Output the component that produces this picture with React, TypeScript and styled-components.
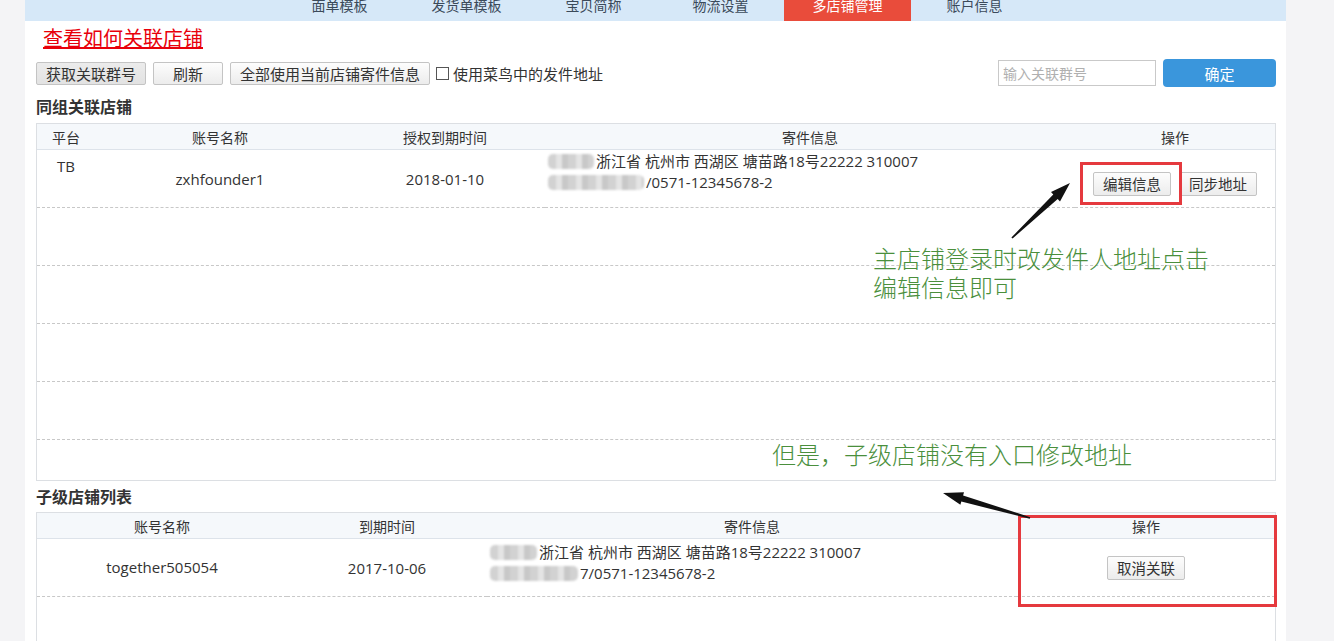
import React from "react";
import styled, { createGlobalStyle } from "styled-components";

const GlobalStyle = createGlobalStyle`
  html, body {
    margin: 0;
    padding: 0;
    background: #f4f4f6;
  }
  body {
    font-family: "Open Sans", "Noto Sans CJK SC", sans-serif;
    color: #333;
  }
`;

const CJK = `"Noto Sans CJK SC", "Open Sans", sans-serif`;

const Page = styled.div`
  position: relative;
  margin-left: 25px;
  width: 1261px;
  min-height: 641px;
  background: #fff;
  overflow: hidden;
`;

const NavBar = styled.div`
  display: flex;
  height: 21px;
  padding-left: 251px;
  background: #d6e8f8;
  overflow: hidden;
`;

const NavItem = styled.div<{ $active?: boolean }>`
  width: 127px;
  height: 21px;
  line-height: 10px;
  text-align: center;
  font-family: ${CJK};
  font-size: 14px;
  color: ${(p) => (p.$active ? "#fff" : "#3b4a5a")};
  background: ${(p) => (p.$active ? "#e94c3b" : "transparent")};
`;

const Content = styled.div`
  padding: 0 10px 0 11px;
`;

const HelpLink = styled.a`
  display: inline-block;
  margin: 5px 0 0 7px;
  font-family: ${CJK};
  font-size: 20px;
  line-height: 24px;
  color: #e8000b;
  text-decoration: underline;
`;

const Toolbar = styled.div`
  display: flex;
  align-items: center;
  margin-top: 8px;
  height: 28px;
`;

const Btn = styled.button<{ $pressed?: boolean }>`
  height: 23px;
  padding: 0 9px;
  margin-right: 7px;
  border: 1px solid #c4c4c4;
  border-radius: 2px;
  background: ${(p) =>
    p.$pressed
      ? "linear-gradient(#ececec, #e2e2e2)"
      : "linear-gradient(#fdfdfd, #ececec)"};
  font-family: ${CJK};
  font-size: 15px;
  line-height: 19px;
  color: #333;
`;

const WideBtn = styled(Btn)`
  min-width: 70px;
`;

const CheckLabel = styled.label`
  display: flex;
  align-items: center;
  gap: 4px;
  font-family: ${CJK};
  font-size: 15px;
  color: #333;
  margin-left: -1px;
`;

const CheckBox = styled.span`
  width: 11px;
  height: 11px;
  border: 1px solid #555;
  background: #fff;
`;

const Spacer = styled.div`
  flex: 1;
`;

const GroupInput = styled.input`
  width: 158px;
  height: 26px;
  box-sizing: border-box;
  border: 1px solid #c9c9c9;
  padding: 0 4px;
  font-family: ${CJK};
  font-size: 14px;
  color: #333;
  margin-right: 7px;
  &::placeholder {
    color: #b0b0b0;
  }
`;

const PrimaryBtn = styled.button`
  width: 113px;
  height: 28px;
  border: none;
  border-radius: 4px;
  background: #3a96dc;
  color: #fff;
  font-family: ${CJK};
  font-size: 15px;
`;

const SectionTitle = styled.h3<{ $mt?: number; $mb?: number }>`
  margin: ${(p) => p.$mt ?? 7}px 0 ${(p) => p.$mb ?? 6}px;
  font-family: ${CJK};
  font-size: 16px;
  font-weight: bold;
  line-height: 22px;
  color: #333;
`;

const TableBox = styled.div<{ $height: number }>`
  height: ${(p) => p.$height}px;
  border: 1px solid #dcdfe3;
  overflow: hidden;
`;

const Table = styled.table`
  width: 100%;
  border-collapse: collapse;
  table-layout: fixed;
`;

const Th = styled.th`
  height: 25px;
  padding: 0;
  background: #f5f8fb;
  border-bottom: 1px solid #dde3ea;
  font-family: ${CJK};
  font-size: 14px;
  font-weight: normal;
  color: #333;
  text-align: center;
`;

const Tr = styled.tr<{ $h?: number; $last?: boolean }>`
  height: ${(p) => p.$h ?? 58}px;
  border-bottom: ${(p) => (p.$last ? "none" : "1px dashed #c8c8c8")};
`;

const Td = styled.td<{ $top?: boolean; $left?: boolean; $pt?: number; $pb?: number }>`
  padding: ${(p) => p.$pt ?? 0}px 0 ${(p) => p.$pb ?? 0}px ${(p) => (p.$left ? 3 : 0)}px;
  vertical-align: ${(p) => (p.$top ? "top" : "middle")};
  text-align: ${(p) => (p.$left ? "left" : "center")};
  font-size: 15px;
  color: #333;
`;

const Addr = styled.div`
  font-family: "Open Sans", "Noto Sans CJK SC", sans-serif;
  font-size: 15px;
  line-height: 21px;
  white-space: nowrap;
`;

const Blur = styled.span<{ $w: number }>`
  display: inline-block;
  width: ${(p) => p.$w}px;
  height: 15px;
  vertical-align: -2px;
  margin-right: 2px;
  border-radius: 5px;
  background: repeating-linear-gradient(
    90deg,
    #d2d2d2 0 8px,
    #e4e4e4 8px 14px,
    #c8c8c8 14px 20px
  );
  filter: blur(1.2px);
`;

const SmallBtn = styled(Btn)`
  height: 24px;
  padding: 0 9px;
  margin: 0 4px;
  font-size: 14.5px;
`;

const Overlay = styled.div`
  position: absolute;
  inset: 0;
  pointer-events: none;
`;

const Note = styled.div<{ $x: number; $y: number }>`
  position: absolute;
  left: ${(p) => p.$x}px;
  top: ${(p) => p.$y}px;
  font-family: ${CJK};
  font-size: 24px;
  font-weight: 300;
  line-height: 29px;
  color: #4a8f3c;
  white-space: nowrap;
`;

const RedBox = styled.div<{ $x: number; $y: number; $w: number; $h: number }>`
  position: absolute;
  left: ${(p) => p.$x}px;
  top: ${(p) => p.$y}px;
  width: ${(p) => p.$w}px;
  height: ${(p) => p.$h}px;
  box-sizing: border-box;
  border: 3px solid #e5393e;
`;

const ArrowLayer = styled.svg`
  position: absolute;
  left: 0;
  top: 0;
`;

type Pt = [number, number];

function arrowPoints(tail: Pt, head: Pt): string {
  const dx = head[0] - tail[0];
  const dy = head[1] - tail[1];
  const len = Math.hypot(dx, dy);
  const ux = dx / len;
  const uy = dy / len;
  const nx = -uy;
  const ny = ux;
  const headLen = 20;
  const bx = head[0] - ux * headLen;
  const by = head[1] - uy * headLen;
  const w0 = 0.8;
  const w1 = 3.2;
  const hw = 6.5;
  const pts: Pt[] = [
    [tail[0] + nx * w0, tail[1] + ny * w0],
    [bx + nx * w1, by + ny * w1],
    [bx + nx * hw, by + ny * hw],
    head,
    [bx - nx * hw, by - ny * hw],
    [bx - nx * w1, by - ny * w1],
    [tail[0] - nx * w0, tail[1] - ny * w0],
  ];
  return pts.map((p) => p.map((v) => v.toFixed(1)).join(",")).join(" ");
}

const navItems = ["面单模板", "发货单模板", "宝贝简称", "物流设置", "多店铺管理", "账户信息"];

const App = () => {
  return (
    <>
      <GlobalStyle />
      <Page>
        <NavBar>
          {navItems.map((n) => (
            <NavItem key={n} $active={n === "多店铺管理"}>
              {n}
            </NavItem>
          ))}
        </NavBar>

        <Content>
          <HelpLink href="#">查看如何关联店铺</HelpLink>

          <Toolbar>
            <Btn $pressed>获取关联群号</Btn>
            <WideBtn>刷新</WideBtn>
            <Btn>全部使用当前店铺寄件信息</Btn>
            <CheckLabel>
              <CheckBox />
              使用菜鸟中的发件地址
            </CheckLabel>
            <Spacer />
            <GroupInput placeholder="输入关联群号" />
            <PrimaryBtn>确定</PrimaryBtn>
          </Toolbar>

          <SectionTitle $mt={8}>同组关联店铺</SectionTitle>
          <TableBox $height={356}>
            <Table>
              <colgroup>
                <col style={{ width: 58 }} />
                <col style={{ width: 250 }} />
                <col style={{ width: 200 }} />
                <col style={{ width: 530 }} />
                <col style={{ width: 200 }} />
              </colgroup>
              <thead>
                <tr>
                  <Th>平台</Th>
                  <Th>账号名称</Th>
                  <Th>授权到期时间</Th>
                  <Th>寄件信息</Th>
                  <Th>操作</Th>
                </tr>
              </thead>
              <tbody>
                <Tr>
                  <Td $top $pt={6}>TB</Td>
                  <Td>zxhfounder1</Td>
                  <Td>2018-01-10</Td>
                  <Td $left $pb={13}>
                    <Addr>
                      <Blur $w={46} />浙江省 杭州市 西湖区 塘苗路18号22222 310007
                    </Addr>
                    <Addr>
                      <Blur $w={96} />/0571-12345678-2
                    </Addr>
                  </Td>
                  <Td $pt={10}>
                    <SmallBtn>编辑信息</SmallBtn>
                    <SmallBtn>同步地址</SmallBtn>
                  </Td>
                </Tr>
                {[0, 1, 2, 3].map((i) => (
                  <Tr key={i}>
                    <Td colSpan={5} />
                  </Tr>
                ))}
                <Tr $h={40} $last>
                  <Td colSpan={5} />
                </Tr>
              </tbody>
            </Table>
          </TableBox>

          <SectionTitle $mt={4} $mb={5}>子级店铺列表</SectionTitle>
          <TableBox $height={140}>
            <Table>
              <colgroup>
                <col style={{ width: 250 }} />
                <col style={{ width: 200 }} />
                <col style={{ width: 530 }} />
                <col style={{ width: 258 }} />
              </colgroup>
              <thead>
                <tr>
                  <Th>账号名称</Th>
                  <Th>到期时间</Th>
                  <Th>寄件信息</Th>
                  <Th>操作</Th>
                </tr>
              </thead>
              <tbody>
                <Tr>
                  <Td $pb={2}>together505054</Td>
                  <Td>2017-10-06</Td>
                  <Td $left $pb={10}>
                    <Addr>
                      <Blur $w={47} />浙江省 杭州市 西湖区 塘苗路18号22222 310007
                    </Addr>
                    <Addr>
                      <Blur $w={88} />7/0571-12345678-2
                    </Addr>
                  </Td>
                  <Td>
                    <SmallBtn>取消关联</SmallBtn>
                  </Td>
                </Tr>
              </tbody>
            </Table>
          </TableBox>
        </Content>

        <Overlay>
          <RedBox $x={1055} $y={162} $w={102} $h={43} />
          <RedBox $x={993} $y={515} $w={259} $h={92} />
          <Note $x={848} $y={243}>
            主店铺登录时改发件人地址点击
            <br />
            编辑信息即可
          </Note>
          <Note $x={747} $y={439}>但是，子级店铺没有入口修改地址</Note>
          <ArrowLayer width={1261} height={641}>
            <polygon points={arrowPoints([987, 238], [1045, 183])} fill="#111" />
            <polygon points={arrowPoints([1005, 518], [918, 493])} fill="#111" />
          </ArrowLayer>
        </Overlay>
      </Page>
    </>
  );
};

export default App;
